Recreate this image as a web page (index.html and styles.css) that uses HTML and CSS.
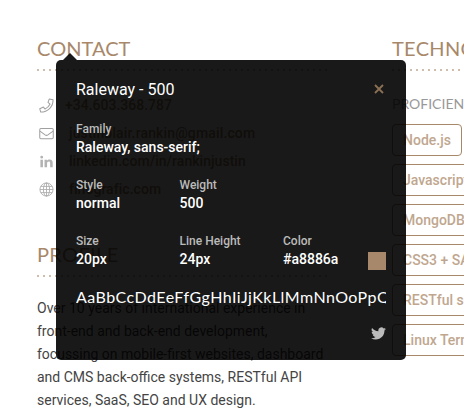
FILE: index.html
```html
<!DOCTYPE html>
<html lang="en">
<head>
<meta charset="utf-8">
<title>Resume</title>
<link rel="stylesheet" href="styles.css">
</head>
<body>
<main class="page">
  <div class="main-column">
    <section class="contact">
      <h2 class="heading"><span class="h-contact">CONTACT</span></h2>
      <ul class="links">
        <li><svg class="icon" viewBox="0 0 16 16"><path d="m11 1 4 .8c.2 7.500-5.700 13.200-13.200 13.200L.8 11.400l3.900-1.700 1.800 2.100c2.300-1.100 4.200-3 5.300-5.300L9.600 4.700z"/></svg><span class="phone">+34.603.368.787</span></li>
        <li><svg class="icon" viewBox="0 0 16 16"><rect x=".8" y="2.700" width="14.400" height="10.800" rx="1.200"/><path d="m1 5.500 5.500 4q1.500 1 3 0l5.500-4"/></svg><span class="mail">justinblair.rankin@gmail.com</span></li>
        <li><svg class="icon solid" viewBox="0 0 16 16"><path d="M1.500 6h2.700v8.200H1.500zM2.900 1.900a1.500 1.500 0 1 1 0 3 1.500 1.500 0 0 1 0-3zM5.900 6h2.600v1.200C9 6.300 9.900 5.800 11.200 5.800c2.500 0 3.400 1.500 3.400 3.800v4.600h-2.700v-4.100c0-1.300-.4-2-1.500-2s-1.800.8-1.800 2v4.100H5.900z"/></svg><span class="linkedin">linkedin.com/in/rankinjustin</span></li>
        <li><svg class="icon globe" viewBox="0 0 16 16"><circle cx="8" cy="8" r="7"/><ellipse cx="8" cy="8" rx="3.300" ry="7"/><path d="M8 1v14M1 8h14M2 4.700h12M2 11.300h12"/></svg><span class="site">finografic.com</span></li>
      </ul>
    </section>
    <section class="profile">
      <h2 class="heading"><span class="h-profile">PROFILE</span></h2>
      <p class="bio">Over 10 years of international experience in<br>front-end and back-end development,<br>focussing on mobile-first websites, dashboard<br>and CMS back-office systems, RESTful API<br>services, SaaS, SEO and UX design.</p>
    </section>
  </div>
  <section class="tech">
    <h2 class="heading"><span class="h-tech">TECHNOLOGY</span></h2>
    <h3 class="subheading">PROFICIENT</h3>
    <div class="tags">
      <span class="tag">Node.js</span>
      <span class="tag">Javascript ES6</span>
      <span class="tag">MongoDB + SQL</span>
      <span class="tag">CSS3 + SASS</span>
      <span class="tag">RESTful services</span>
      <span class="tag">Linux Terminal</span>
    </div>
  </section>
</main>
<aside class="popup">
  <header class="popup-header"><span class="popup-title">Raleway - 500</span><svg class="close" viewBox="0 0 10 10"><path d="m1 1 8 8M9 1 1 9"/></svg></header>
  <dl class="props">
    <div class="prop wide"><dt>Family</dt><dd>Raleway, sans-serif;</dd></div>
    <div class="prop"><dt>Style</dt><dd>normal</dd></div>
    <div class="prop last"><dt>Weight</dt><dd>500</dd></div>
    <div class="prop"><dt>Size</dt><dd>20px</dd></div>
    <div class="prop"><dt>Line Height</dt><dd>24px</dd></div>
    <div class="prop color"><dt>Color</dt><dd>#a8886a</dd><i class="swatch"></i></div>
  </dl>
  <div class="sample">AaBbCcDdEeFfGgHhIiJjKkLlMmNnOoPpQqRr</div>
  <svg class="bird" viewBox="0 0 24 24"><path d="M24 4.600c-.9.400-1.800.7-2.800.8 1-.6 1.800-1.600 2.200-2.700-1 .6-2 1-3.100 1.200a4.900 4.900 0 0 0-8.400 4.500C7.700 8.100 4.100 6.100 1.700 3.200a4.900 4.900 0 0 0 1.500 6.500c-.8 0-1.600-.2-2.200-.6 0 2.300 1.600 4.400 3.900 4.900-.7.200-1.500.2-2.200.1.600 2 2.400 3.400 4.600 3.400A9.900 9.900 0 0 1 0 19.500 13.900 13.900 0 0 0 7.500 21.700c9.100 0 14.300-7.700 14-14.600 1-.7 1.800-1.600 2.500-2.500z"/></svg>
</aside>
</body>
</html>
```
FILE: styles.css
```css
* { box-sizing: border-box; }
body { margin: 0; width: 464px; height: 408px; overflow: hidden; position: relative; background: #fff; font-family: Roboto, sans-serif; }
h2, h3, p, ul, dl, dd { margin: 0; padding: 0; }
.page { display: grid; grid-template-columns: 290px 290px; column-gap: 65px; width: 464px; height: 408px; overflow: hidden; padding: 36px 0 0 37px; }
.heading { height: 35px; color: #a8886a; font: 400 20px/24px Lato, sans-serif; white-space: nowrap; background: repeating-linear-gradient(90deg, #d0bdac 0 2px, transparent 2px 6px) 0 100% / 100% 2px no-repeat; }
.h-contact { letter-spacing: .05px; }
.h-profile { letter-spacing: .35px; }
.h-tech { letter-spacing: .3px; }
.links { list-style: none; padding-top: 20px; }
.links li { display: flex; align-items: center; height: 28px; padding-left: 2px; font-size: 14px; font-weight: 500; color: #a8886a; white-space: nowrap; }
.icon { width: 15px; height: 15px; margin-right: 15px; flex: none; fill: none; stroke: #a0a0a0; stroke-width: 1.1; stroke-linejoin: round; }
.icon.solid { fill: #b3b3b3; stroke: none; }
.icon.globe { stroke: #aaa; stroke-width: .9; }
.phone { margin-left: -4px; }
.mail { letter-spacing: .14px; }
.linkedin, .site { letter-spacing: .04px; }
.profile { padding-top: 39px; }
.bio { padding-top: 20px; font-size: 14px; line-height: 23px; color: #444; white-space: nowrap; }
.subheading { margin-top: 22px; font: 400 14px/22px Lato, sans-serif; color: #999; }
.tags { display: flex; flex-direction: column; align-items: flex-start; gap: 8px; margin-top: 9px; }
.tag { height: 32px; padding: 0 10px; border: 1px solid #a8886a; border-radius: 4px; color: #bfa78f; font-size: 14px; font-weight: 500; line-height: 30px; white-space: nowrap; }
.popup { position: absolute; left: 56px; top: 60px; width: 350px; height: 300px; padding: 20px; border-radius: 5px; background: rgba(0,0,0,.9); color: #fff; }
.popup::before { content: ""; position: absolute; left: 7px; top: -7px; border: solid transparent; border-width: 0 7px 7px; border-bottom-color: rgba(0,0,0,.9); }
.popup-header { display: flex; justify-content: space-between; align-items: center; height: 19px; }
.popup-title { font-size: 16px; line-height: 19px; }
.close { width: 10px; height: 10px; margin: -2px 2px 0 0; fill: none; stroke: #8c7054; stroke-width: 1.8; }
.props { display: grid; grid-template-columns: 103.500px 103.500px 103px; row-gap: 20px; margin-top: 22px; }
.prop { height: 36px; font-weight: 500; }
.prop.wide { grid-column: 1 / -1; }
.prop.last { grid-column: 2 / -1; }
.prop dt { font-size: 12px; line-height: 16px; color: #bbb; }
.prop dd { font-size: 14px; line-height: 20px; }
.prop.color { display: grid; grid-template-columns: 1fr 18px; }
.prop.color dt { grid-column: 1 / -1; }
.swatch { width: 18px; height: 18px; margin-top: 3px; background: #a8886a; }
.sample { margin-top: 16px; height: 24px; overflow: hidden; white-space: nowrap; font: 400 16px/24px Lato, sans-serif; letter-spacing: .46px; }
.bird { display: block; width: 15px; height: 15px; margin: 17px 0 0 auto; fill: #bbb; }
```
